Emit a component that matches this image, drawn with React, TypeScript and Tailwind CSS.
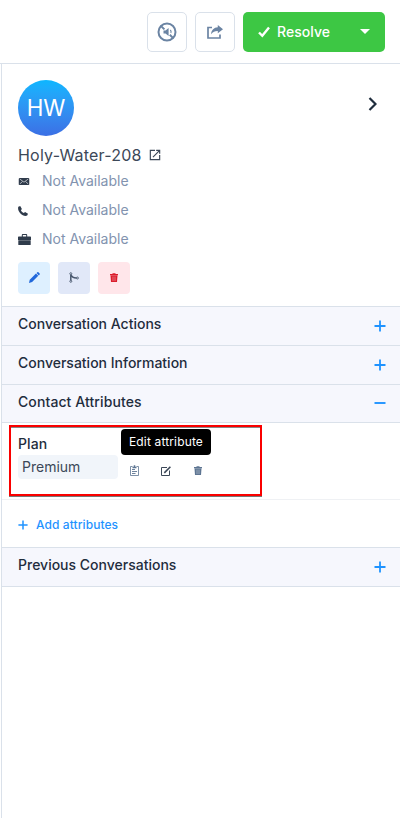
import React from 'react';

type IconProps = { className?: string };

const MuteIcon = ({ className }: IconProps) => (
  <svg className={className} viewBox="0 0 20 20" fill="none" stroke="currentColor">
    <circle cx="10" cy="10" r="8.500" strokeWidth="2" />
    <path d="M3.600 3.600 7.400 7.400M12.800 12.800l3.600 3.600" strokeWidth="2" />
    <path d="M6.500 8.500h2L11.600 6v8l-3.100-2.500h-2z" fill="currentColor" stroke="none" />
    <path d="M13.300 8q1.200 1.200.6 3" strokeWidth="1.100" />
  </svg>
);

const ShareIcon = ({ className }: IconProps) => (
  <svg className={className} viewBox="0 0 16 14" fill="none" stroke="currentColor">
    <path d="M5 2.500H1V13h12V9.500" strokeWidth="1.700" />
    <path d="M10.800 0 16 4.200l-5.200 4V5.900C8 5.800 6 6.700 4 9.200c.5-4.200 3-6.600 6.800-6.900z" fill="currentColor" stroke="none" />
  </svg>
);

const CheckIcon = ({ className }: IconProps) => (
  <svg className={className} viewBox="0 0 12 12" fill="none" stroke="currentColor" strokeWidth="2.400">
    <path d="M1 6.500 4.300 9.800 11 1.500" />
  </svg>
);

const OpenIcon = ({ className }: IconProps) => (
  <svg className={className} viewBox="0 0 24 24" fill="currentColor">
    <path d="M19 19H5V5h7V3H3v18h18v-9h-2v7ZM14 3v2h3.600l-9.800 9.800 1.400 1.400L19 6.400V10h2V3h-7Z" />
  </svg>
);

const MailIcon = ({ className }: IconProps) => (
  <svg className={className} viewBox="0 0 12 8">
    <rect width="12" height="8" rx="1" fill="currentColor" />
    <path d="m1.200 1.200 4.800 3.600 4.800-3.600M1.200 6.800l3-2.700M10.800 6.800l-3-2.700" fill="none" stroke="white" strokeWidth=".7" />
  </svg>
);

const PhoneIcon = ({ className }: IconProps) => (
  <svg className={className} viewBox="0 0 10 10" fill="currentColor">
    <path d="M.3.800 2.200 0l1.700 2.900-1 1.300c.7 1.300 1.600 2.200 2.900 2.900l1.300-1L10 7.800 9.200 9.600C5 11.500-1.200 5.300.3.800Z" />
  </svg>
);

const CaseIcon = ({ className }: IconProps) => (
  <svg className={className} viewBox="0 0 13 11" fill="currentColor">
    <path d="M3.800 2.500V.9Q3.800 0 4.700 0h3.600q.9 0 .9.900v1.600h3.100q.7 0 .7.700V6H0V3.200Q0 2.500.7 2.500Zm1 0h3.400V1H4.800ZM.3 6.200h12.400v4.200q0 .6-.6.600H.9q-.6 0-.6-.6Z" />
  </svg>
);

const PencilIcon = ({ className }: IconProps) => (
  <svg className={className} viewBox="0 0 12 12" fill="currentColor">
    <path d="M0 12 .8 8.500 7.600 1.700l2.500 2.500L3.400 11ZM8.200 1.200 9.100.3q.6-.5 1.200 0l1.300 1.300q.5.600 0 1.200l-.9.900Z" />
  </svg>
);

const MergeIcon = ({ className }: IconProps) => (
  <svg className={className} viewBox="0 0 10 11" fill="none" stroke="currentColor">
    <circle cx="1.800" cy="1.700" r="1" strokeWidth=".9" />
    <circle cx="1.800" cy="9.300" r="1" strokeWidth=".9" />
    <circle cx="8.400" cy="6" r="1" strokeWidth=".9" />
    <path d="M1.800 2.700v5.600M1.900 2.800Q3 5.800 7.400 6" strokeWidth="1.500" />
  </svg>
);

const TrashIcon = ({ className }: IconProps) => (
  <svg className={className} viewBox="0 0 8 9">
    <path d="M0 1.100h2.500V.3h3v.8H8V2.200H0ZM.5 2.400h7L7 9H1Z" fill="currentColor" />
    <path d="M3 3.500v4.600M5 3.500v4.600" stroke="white" strokeWidth=".6" opacity=".65" />
  </svg>
);

const ClipboardIcon = ({ className }: IconProps) => (
  <svg className={className} viewBox="0 0 9 11" fill="none" stroke="currentColor">
    <path d="M2.500 1.500h-2v9h8v-9h-2" strokeWidth=".8" />
    <path d="M2.500 2.400h4M4.500.3v2" strokeWidth="1.500" />
    <path d="M2 4.500h3M2 6.500h5M2 8.500h3.500" strokeWidth=".9" />
  </svg>
);

const ComposeIcon = ({ className }: IconProps) => (
  <svg className={className} viewBox="0 0 10 10" fill="none" stroke="currentColor">
    <path d="M6 1.500H.5v8h8V4.500" strokeWidth="1" />
    <path d="M3.300 6.900 9.400.8" strokeWidth="1.600" />
  </svg>
);

const Plus = ({ className }: IconProps) => (
  <svg className={className} viewBox="0 0 12 12" stroke="currentColor" strokeWidth="1.800">
    <path d="M.5 6h11M6 .5v11" />
  </svg>
);

const Minus = ({ className }: IconProps) => (
  <svg className={className} viewBox="0 0 12 12" stroke="currentColor" strokeWidth="1.900">
    <path d="M.5 6h11" />
  </svg>
);

function SectionHeader({ title, open = false }: { title: string; open?: boolean }) {
  return (
    <button
      className={`flex w-full items-center justify-between border-b border-[#dae1ea] bg-[#f6f7fd] pr-[14.5px] pl-4 text-left ${open ? 'h-[38px]' : 'h-[39px]'}`}
    >
      <span className={`text-sm leading-5 font-medium text-[#1f2d3d] ${open ? 'pb-[3px] tracking-[0.1px]' : 'pb-[5px] tracking-[0px]'}`}>
        {title}
      </span>
      {open ? (
        <Minus className="mb-[2px] size-3 text-[#1f93ff]" />
      ) : (
        <Plus className="mb-px size-3 text-[#1f93ff]" />
      )}
    </button>
  );
}

function ContactRow({ icon }: { icon: React.ReactNode }) {
  return (
    <div className="flex h-[29px] items-center text-sm">
      <span className="flex w-6 items-center text-[#2f3b4b]">{icon}</span>
      <span className="pb-[2px] text-[#8293af]">Not Available</span>
    </div>
  );
}

export default function App() {
  return (
    <div className="h-[818px] w-[400px] overflow-hidden bg-white font-['Inter',sans-serif] text-[#1f2d3d]">
      <header className="flex h-16 items-center gap-2 border-b border-[#dae1ea] pr-[15px] pl-[147px]">
        <button className="flex size-10 items-center justify-center rounded-[5px] border border-[#dae1ea] text-[#6b84a3]">
          <MuteIcon className="size-5" />
        </button>
        <button className="flex size-10 items-center justify-center rounded-[5px] border border-[#dae1ea] text-[#6b84a3]">
          <ShareIcon className="h-3.5 w-4" />
        </button>
        <button className="flex h-10 flex-1 items-center rounded-[5px] bg-[#3dc744] pl-[15px] text-white">
          <CheckIcon className="h-3 w-3" />
          <span className="ml-[7px] flex-1 text-left text-sm font-medium tracking-[0.05px]">Resolve</span>
          <svg className="mr-[15px] h-[5px] w-[10px]" viewBox="0 0 10 5" fill="currentColor">
            <path d="M0 0h10L5 5Z" />
          </svg>
        </button>
      </header>

      <aside className="ml-px h-[754px] border-l border-[#dae1ea]">
        <div className="flex h-[243px] flex-col border-b border-[#dae1ea] px-4 pt-4">
          <div className="flex items-start justify-between">
            <div className="flex size-14 items-center justify-center rounded-full bg-linear-to-b from-[#0bb6ff] to-[#3b6fe5] text-[22.400px] text-white">
              HW
            </div>
            <svg className="mt-[17px] mr-[7px] h-[14px] w-[9px] text-[#1f2d3d]" viewBox="0 0 9 14" fill="none" stroke="currentColor" strokeWidth="2.200">
              <path d="m1.500 1 6 6-6 6" />
            </svg>
          </div>
          <div className="mt-[7px] flex h-6 items-center text-base tracking-[0.21px] text-[#3c4858]">
            <span>Holy-Water-208</span>
            <OpenIcon className="ml-1.5 size-3.5" />
          </div>
          <ContactRow icon={<MailIcon className="h-[7px] w-[12px]" />} />
          <ContactRow icon={<PhoneIcon className="size-[10px]" />} />
          <ContactRow icon={<CaseIcon className="h-[11px] w-[13px]" />} />
          <div className="mt-2 flex gap-2">
            <button className="flex size-8 items-center justify-center rounded bg-[#def0ff] pb-px text-[#2168db]">
              <PencilIcon className="size-[11px]" />
            </button>
            <button className="flex size-8 items-center justify-center rounded bg-[#e1e8f8] pb-px text-[#4a596f]">
              <MergeIcon className="h-[11px] w-[10px]" />
            </button>
            <button className="flex size-8 items-center justify-center rounded bg-[#ffe6ea] pb-px text-[#db1c2b]">
              <TrashIcon className="h-[9px] w-[8px]" />
            </button>
          </div>
        </div>

        <SectionHeader title="Conversation Actions" />
        <SectionHeader title="Conversation Information" />
        <SectionHeader title="Contact Attributes" open />

        <div className="relative h-[77px] border-b border-[#eff1f4] px-4 pt-[11px]">
          <div className="h-[21px] text-sm leading-5 font-medium tracking-[0.1px]">Plan</div>
          <div className="flex h-6 items-center">
            <div className="h-6 w-[100px] rounded bg-[#f1f5fa] pl-1 text-sm leading-6 text-[#3c4858]">
              Premium
            </div>
            <div className="mt-[7px] ml-3 flex items-center text-[#5d7592]">
              <ClipboardIcon className="h-[11px] w-[9px]" />
              <ComposeIcon className="ml-[22px] size-[10px] text-[#3c4858]" />
              <TrashIcon className="ml-[23px] h-[9px] w-[8px]" />
            </div>
          </div>
          <div className="absolute top-[2px] left-[7px] h-[71px] w-[253px] border-2 border-[#fa0000] shadow-[0_1px_0_#777,inset_0_1px_0_#888]" />
          <div className="absolute top-[6px] left-[119px] flex h-[26px] w-[90px] items-center justify-center rounded bg-black text-xs tracking-[0.15px] whitespace-nowrap text-white">
            Edit attribute
          </div>
        </div>

        <div className="flex h-12 items-center border-b border-[#dae1ea] px-4 pt-[3px] text-[#1f93ff]">
          <Plus className="mb-px size-[10px]" />
          <span className="ml-2 text-xs font-medium tracking-[0.08px]">Add attributes</span>
        </div>
        <SectionHeader title="Previous Conversations" />
      </aside>
    </div>
  );
}
